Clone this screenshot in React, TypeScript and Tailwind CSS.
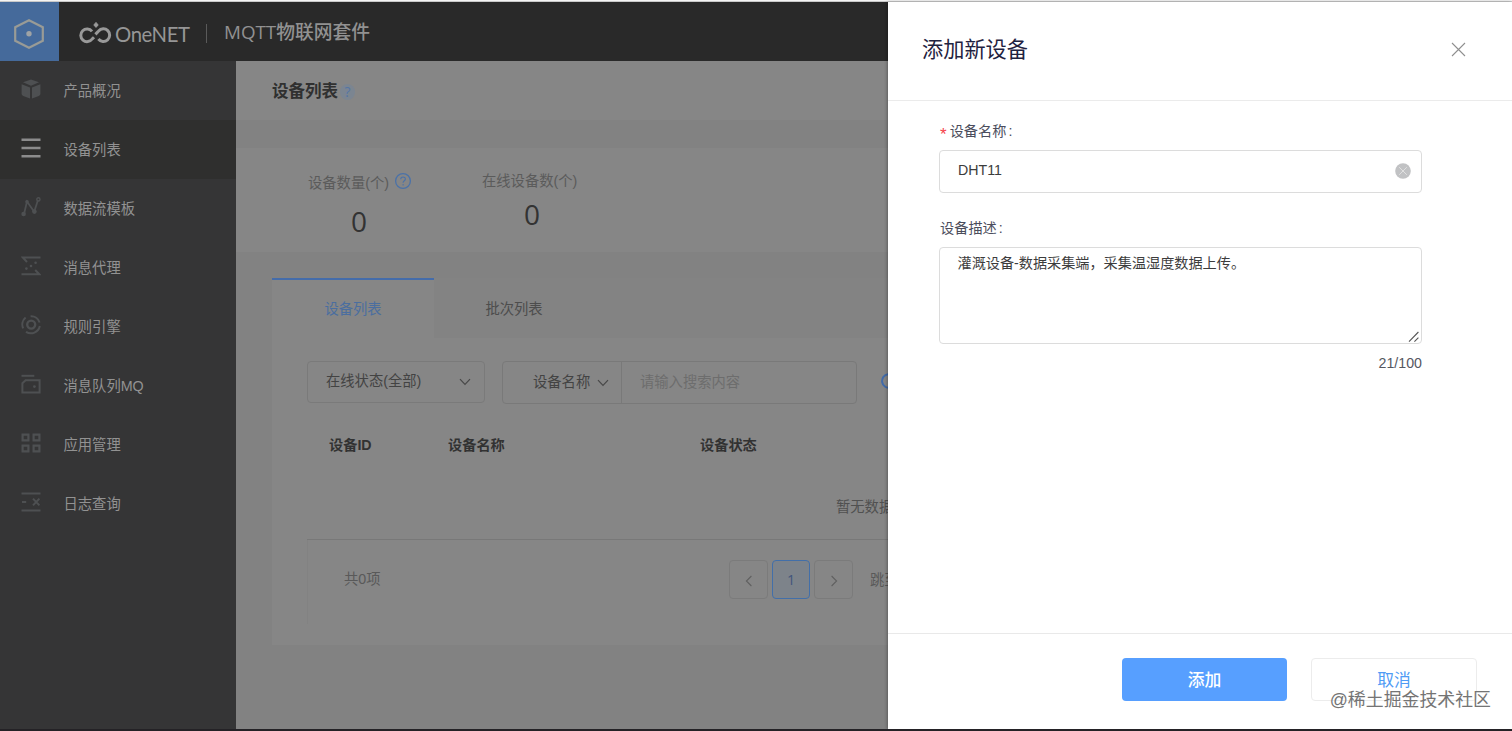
import React from "react";

type IconProps = { children: React.ReactNode; active?: boolean };

function NavIcon({ children, active }: IconProps) {
  return (
    <svg
      width="20"
      height="20"
      viewBox="0 0 20 20"
      fill="none"
      stroke="currentColor"
      strokeWidth="2"
      className={active ? "mb-[3px] text-[#8c8c8c]" : "mb-[3px] text-[#4e5052]"}
    >
      {children}
    </svg>
  );
}

const nav: { label: string; active?: boolean; icon: React.ReactNode }[] = [
  {
    label: "产品概况",
    icon: (
      <g fill="currentColor" stroke="none">
        <path d="M10 0.4 18 3.2 10 6.8 2 3.2Z" />
        <path d="M0.6 5.2 9 8.6V19.4L2.2 17Q0.6 16.2 0.6 15Z" />
        <path d="M19.4 5.2 11 8.6V19.4L17.8 17Q19.4 16.2 19.4 15Z" />
      </g>
    ),
  },
  { label: "设备列表", active: true, icon: <path d="M0.5 1.7h19M0.5 10h19M0.5 18.2h19" strokeWidth="2.4" /> },
  {
    label: "数据流模板",
    icon: (
      <>
        <path d="M3 17 6 4.6 13.2 14.8 17 3" strokeWidth="1.8" />
        <g fill="currentColor" stroke="none">
          <circle cx="2.6" cy="17" r="2.3" />
          <circle cx="6" cy="4.8" r="1.8" />
          <circle cx="13.4" cy="14.6" r="2.3" />
        </g>
        <circle cx="17.4" cy="2.4" r="1.6" strokeWidth="1.4" />
      </>
    ),
  },
  {
    label: "消息代理",
    icon: (
      <>
        <path d="M19.5 1.6H2L6 6M0.5 18.2h17.8L14.2 14" />
        <g fill="currentColor" stroke="none">
          <circle cx="10" cy="10" r="1.3" />
          <circle cx="14.6" cy="6.8" r="1.3" />
          <circle cx="5.4" cy="12.6" r="1.3" />
        </g>
      </>
    ),
  },
  {
    label: "规则引擎",
    icon: (
      <>
        <circle cx="10.2" cy="9.6" r="4" strokeWidth="2.4" />
        <path d="M4.6 2.6A9 9 0 0 0 2.2 13.4M9.6 1.2A8.8 8.8 0 0 1 18.6 7.6M18.8 11A9 9 0 0 1 5 16.8" />
      </>
    ),
  },
  {
    label: "消息队列MQ",
    icon: (
      <>
        <path d="M0.5 1.8h12.8" />
        <path d="M4.6 6.2H18.6V18.4H1.4V9.2Z" />
        <circle cx="13.4" cy="12.6" r="1.4" fill="currentColor" stroke="none" />
      </>
    ),
  },
  {
    label: "应用管理",
    icon: <path d="M1.6 1.6h5.8v5.8h-5.8zM12.6 1.6h5.8v5.8h-5.8zM1.6 12.6h5.8v5.8h-5.8zM12.6 12.6h5.8v5.8h-5.8z" strokeWidth="2.2" />,
  },
  {
    label: "日志查询",
    icon: <path d="M0.5 1.6h19M0.5 18.4h19M1 10h4.2M12 6.6l6.4 6.8M18.4 6.6l-6.4 6.8" />,
  },
];

function Header() {
  return (
    <header className="flex h-[59px] shrink-0 bg-[#292929]">
      <div className="flex w-[59px] items-center justify-center bg-[#456a9b]">
        <svg width="32" height="32" viewBox="0 0 32 32" fill="none" className="mr-px mt-[4px]">
          <path d="M16 2.2 29.8 9.2V22.8L16 29.8 2.2 22.8V9.2Z" stroke="#999b96" strokeWidth="2.2" />
          <circle cx="16" cy="15.8" r="2.7" fill="#9fa3a5" />
        </svg>
      </div>
      <svg width="34" height="26" viewBox="0 0 34 26" fill="none" className="ml-5 mt-[17px]" stroke="#999" strokeWidth="3">
        <path d="M13 12.4A6.3 6.3 0 1 0 13.2 20L15 18.2" />
        <path d="M19.4 20A6.3 6.3 0 1 0 19.6 12L16.4 15.4" />
        <path d="M14.8 6 17 3.4 19.2 6 17 8.4Z" fill="#999" strokeWidth="1" />
      </svg>
      <span className="ml-[2px] mt-[19px] w-[74px] whitespace-nowrap font-['Lato','Liberation_Sans',sans-serif] text-[20.3px] leading-[26px] tracking-[-0.4px] text-[#969696]">
        OneNET
      </span>
      <span className="ml-[17px] mt-[22px] h-[19px] w-px bg-[#5a5a5a]" />
      <span className="ml-[17px] mt-[17px] whitespace-nowrap font-['Open_Sans','Noto_Sans_CJK_SC',sans-serif] text-[18.8px] font-medium leading-[27px] text-[#919191]">
        MQTT物联网套件
      </span>
    </header>
  );
}

function Sidebar() {
  return (
    <nav className="w-[236px] shrink-0 bg-[#353536]">
      {nav.map((n) => (
        <div key={n.label} className={n.active ? "flex h-[59px] items-center bg-[#2f2f2e] pl-[21px]" : "flex h-[59px] items-center pl-[21px]"}>
          <NavIcon active={n.active}>{n.icon}</NavIcon>
          <span className="ml-[22.5px] text-[14.3px] leading-5 text-[#929292]">{n.label}</span>
        </div>
      ))}
    </nav>
  );
}

function Chevron({ className }: { className: string }) {
  return (
    <svg width="12" height="8" viewBox="0 0 12 8" fill="none" stroke="#484848" strokeWidth="1.2" className={className}>
      <path d="M1 1.2 6 6.4 11 1.2" />
    </svg>
  );
}

function Main() {
  return (
    <main className="flex w-[652px] shrink-0 flex-col overflow-hidden bg-[#828282]">
      <div className="flex h-[59px] shrink-0 items-center bg-[#868686] pl-9">
        <h1 className="pt-px text-[16.5px] font-bold leading-6 text-[#303030]">设备列表</h1>
        <span className="ml-[2px] mt-[3px] flex h-[16px] w-[15px] items-center justify-center rounded-full bg-[#7b8591] font-['Open_Sans',sans-serif] text-[14px] leading-none text-[#5575a4]">?</span>
      </div>

      <section className="mt-7 flex h-[104px] shrink-0 bg-[#868686] pl-[72px]">
        <div className="w-[103px]">
          <div className="flex h-[50px] items-end">
            <span className="mb-[5px] whitespace-nowrap text-[14.3px] leading-5 text-[#5b5b5b]">设备数量(个)</span>
            <svg width="18" height="18" viewBox="0 0 18 18" fill="none" stroke="#4b72a8" className="mb-[8px] ml-[5px] shrink-0">
              <circle cx="9" cy="9" r="7.4" strokeWidth="1.3" />
              <path d="M6.7 7.2C6.7 4.2 11.5 4.3 11.4 7.1 11.3 8.8 9.1 8.8 9.1 10.8M9.1 12v1.4" strokeWidth="1.1" />
            </svg>
          </div>
          <div className="w-[102px] pt-[7px] text-center font-['Open_Sans',sans-serif] text-[28px] leading-8 text-[#333]">0</div>
        </div>
        <div className="ml-[71px] w-[100px] pt-[23px]">
          <div className="whitespace-nowrap text-[14.3px] leading-5 text-[#5b5b5b]">在线设备数(个)</div>
          <div className="pt-[7px] text-center font-['Open_Sans',sans-serif] text-[28px] leading-8 text-[#333]">0</div>
        </div>
      </section>

      <section className="ml-9 mt-[26px] flex h-[367px] w-[900px] shrink-0 flex-col bg-[#868686]">
        <div className="flex h-[60px] shrink-0 bg-[#838383]">
          <div className="flex w-[162px] items-center justify-center border-t-[2px] border-[#446caa] bg-[#868686] pt-px text-[14.3px] text-[#4b6e9f]">
            设备列表
          </div>
          <div className="flex w-[160px] items-center justify-center pt-[3px] text-[14.3px] text-[#4d4d4d]">批次列表</div>
        </div>

        <div className="flex h-[68px] shrink-0 pl-[35px] pt-[22px] text-[14.3px] text-[#434343]">
          <div className="mt-px flex h-[42px] w-[178px] items-center rounded-sm border border-[#7a7a7a] pl-[18px]">
            <span className="pb-px">在线状态(全部)</span>
            <Chevron className="ml-auto mr-[13px]" />
          </div>
          <div className="ml-[17px] mt-px flex h-[43px] w-[355px] items-center rounded-sm border border-[#797979]">
            <div className="flex h-full w-[119px] items-center border-r border-[#797979] pl-[30px] pt-px">
              设备名称
              <Chevron className="ml-[7px]" />
            </div>
            <span className="pl-[18px] pt-px text-[#6d6d6d]">请输入搜索内容</span>
          </div>
          <svg width="18" height="18" viewBox="0 0 18 18" fill="none" stroke="#426ba9" strokeWidth="2" className="ml-[23px] mt-[12px]">
            <path d="M13 3.6A6.8 6.8 0 1 0 14.4 13" />
          </svg>
        </div>

        <div className="mt-5 flex h-10 shrink-0 items-center text-[14.2px] font-bold text-[#323232]">
          <span className="w-[118px] shrink-0 pl-[57px]">
            <span className="whitespace-nowrap">设备ID</span>
          </span>
          <span className="ml-[58px] w-[252px]">设备名称</span>
          <span>设备状态</span>
        </div>

        <div className="ml-[35px] flex h-[74px] shrink-0 items-center border-b border-[#787878] pl-[529px] pt-[10px] text-[14.3px] text-[#505050]">
          暂无数据
        </div>

        <div className="ml-[35px] flex h-[84px] shrink-0 border-l border-[#828282] pl-9 pt-[20px] text-[14.3px] text-[#595959]">
          <span className="mt-[9px] w-[385px] leading-5">共0项</span>
          <div className="flex h-[39px] w-[39px] items-center justify-center rounded-sm border border-[#7b7b7b]">
            <svg width="8" height="12" viewBox="0 0 8 12" fill="none" stroke="#606060" strokeWidth="1.1" className="mt-[3px]">
              <path d="M6.4 1 1.4 6l5 5" />
            </svg>
          </div>
          <div className="ml-1 flex h-[39px] w-[38px] items-center justify-center rounded-sm border border-[#426fa9] bg-[#7d838a] font-['Open_Sans',sans-serif] text-[#42557c]">1</div>
          <div className="ml-1 flex h-[39px] w-[39px] items-center justify-center rounded-sm border border-[#7b7b7b]">
            <svg width="8" height="12" viewBox="0 0 8 12" fill="none" stroke="#606060" strokeWidth="1.1" className="mt-[3px]">
              <path d="M1.6 1l5 5-5 5" />
            </svg>
          </div>
          <span className="ml-[17px] mt-[10px] leading-5">跳至</span>
        </div>
      </section>
    </main>
  );
}

function Drawer() {
  return (
    <aside className="relative flex w-[624px] shrink-0 flex-col bg-white shadow-[-1px_0_3px_rgba(0,0,0,0.3)]">
      <div className="flex h-[99px] shrink-0 items-center border-b border-[#ebebeb] pl-[34px] pr-[46px]">
        <h2 className="pb-[2px] text-[21.2px] leading-8 text-[#1f2240]">添加新设备</h2>
        <svg width="15" height="15" viewBox="0 0 15 15" stroke="#8f8f8f" strokeWidth="1.1" className="ml-auto mb-[3px]">
          <path d="M1 1 14 14M14 1 1 14" />
        </svg>
      </div>

      <div className="flex flex-1 flex-col pl-[51px] pr-[90px] text-[14.2px]">
        <label className="mt-[21px] flex h-5 items-center text-[#4b4d5c]">
          <span className="ml-px mr-[3px] pt-[5px] text-[17px] leading-5 text-[#f5414b]">*</span>设备名称<span className="ml-[2px]">:</span>
        </label>
        <div className="mt-[8px] flex h-[43px] items-center rounded-sm border border-[#dcdcdc] pl-[18px] pr-[10px] text-[#3c3c3c]">
          <span className="pb-px">DHT11</span>
          <svg width="16" height="16" viewBox="0 0 16 16" className="mb-px ml-auto">
            <circle cx="8" cy="8" r="7.8" fill="#c1c2c4" />
            <path d="M4.2 4.2 11.8 11.8M11.8 4.2 4.2 11.8" stroke="#e4e4e4" strokeWidth="0.9" />
          </svg>
        </div>
        <label className="mt-[26px] flex h-5 items-center pl-px text-[#4b4d5c]">
          设备描述<span className="ml-[2px]">:</span>
        </label>
        <div className="mt-[8px] flex h-[97px] justify-between rounded-sm border border-[#dcdcdc] pl-[17.5px] text-[#3c3c3c]">
          <span className="pt-[5px] text-[14.15px] leading-5">灌溉设备-数据采集端，采集温湿度数据上传。</span>
          <svg width="12" height="12" viewBox="0 0 12 12" stroke="#555" strokeWidth="1.1" className="mr-px mt-auto">
            <path d="M1 10.6 10.4 1M6.4 10.6 10.4 6.6" />
          </svg>
        </div>
        <div className="mt-[9px] text-right leading-5 text-[#55575f]">21/100</div>
      </div>

      <footer className="flex h-[96px] shrink-0 justify-end gap-6 border-t border-[#e9e9e9] pr-[35px] pt-[24px] text-[16.8px]">
        <button className="h-[43px] w-[165px] rounded-sm bg-[#579fff] pt-[3px] font-medium text-white">添加</button>
        <button className="h-[43px] w-[166px] rounded-sm border border-[#ececec] pt-[3px] text-[#4f9bf5]">取消</button>
      </footer>
      <span className="absolute bottom-[17px] right-[21px] whitespace-nowrap text-[17.9px] leading-6 text-[#747474]">@稀土掘金技术社区</span>
    </aside>
  );
}

export default function App() {
  return (
    <div className="flex h-[731px] w-[1512px] flex-col overflow-hidden border-b-2 border-[#242226] bg-white font-['Liberation_Sans','Noto_Sans_CJK_SC',sans-serif]">
      <div className="h-[2px] shrink-0 border-b border-[#c9c9c9] bg-[#f4f4f4]" />
      <div className="flex min-h-0 flex-1">
        <div className="flex w-[888px] shrink-0 flex-col">
          <Header />
          <div className="flex min-h-0 flex-1">
            <Sidebar />
            <Main />
          </div>
        </div>
        <Drawer />
      </div>
    </div>
  );
}
